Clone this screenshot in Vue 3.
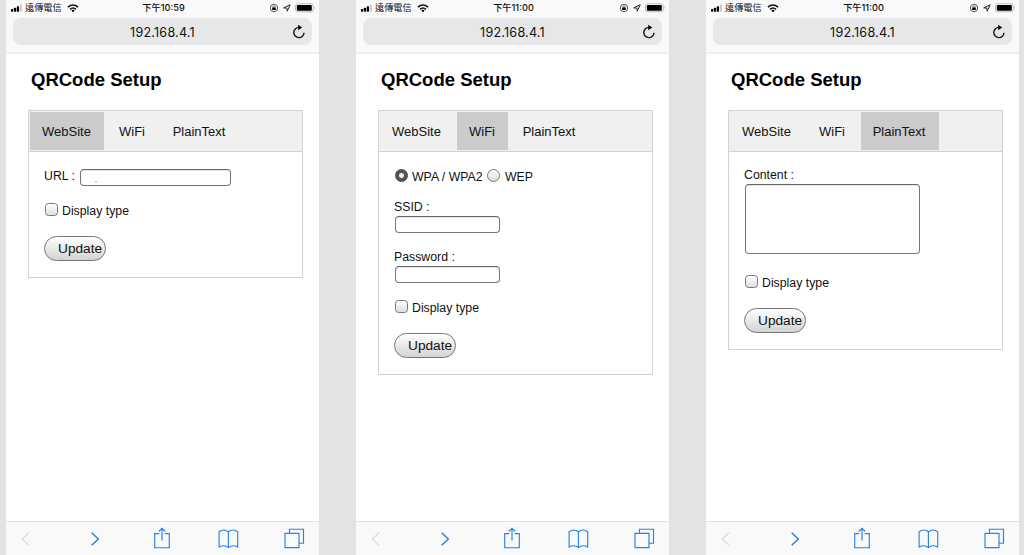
<script setup>
const tabs = ['WebSite', 'WiFi', 'PlainText']
const phones = [
  { time: '下午10:59', active: 'WebSite' },
  { time: '下午11:00', active: 'WiFi' },
  { time: '下午11:00', active: 'PlainText' },
]
</script>

<template>
  <main class="board">
    <section v-for="phone in phones" :key="phone.active" class="phone">
      <header class="chrome">
        <div class="status">
          <div class="carrier">
            <svg class="signal" width="12" height="8" viewBox="0 0 12 8">
              <rect x="0" y="5" width="2.2" height="2.7" rx=".6" />
              <rect x="2.9" y="3.7" width="2.2" height="4" rx=".6" />
              <rect x="5.8" y="2.2" width="2.2" height="5.5" rx=".6" />
              <rect x="8.8" y=".5" width="2" height="7.2" rx=".6" fill="#c6c6c6" />
            </svg>
            <span class="operator">遠傳電信</span>
            <svg width="12" height="9" viewBox="0 0 12 9">
              <g fill="none" stroke="#111" stroke-width="1.55">
                <path d="M.9 3.2Q6-1.2 11.1 3.2" />
                <path d="M3 5.3Q6 2.7 9 5.3" />
              </g>
              <path d="M4.3 6.5Q6 5.2 7.7 6.5L6 8.3Z" />
            </svg>
          </div>
          <span class="time">{{ phone.time }}</span>
          <div class="indicators">
            <svg width="10" height="10" viewBox="0 0 10 10">
              <circle cx="5" cy="5" r="3.7" fill="none" stroke="#444" stroke-width=".9" />
              <rect x="3.2" y="4.5" width="3.6" height="2.6" rx=".3" />
              <path d="M3.9 4.8V3.7Q5 2.1 6.1 3.7V4.8" fill="none" stroke="#333" stroke-width=".7" />
            </svg>
            <svg width="8" height="8" viewBox="0 0 8 8">
              <path d="M.7 3.9 7.2.8 4.2 7.2 3.9 4.1Z" fill="none" stroke="#222" stroke-width="1" stroke-linejoin="round" />
            </svg>
            <svg width="21" height="10" viewBox="0 0 21 10">
              <rect x=".5" y=".8" width="17.7" height="8" rx="2.2" fill="#fff" stroke="#b8b8b8" />
              <rect x="1.8" y="2" width="15" height="5.7" rx="1" />
              <path d="M19.2 3.3Q20.5 4.8 19.2 6.3Z" fill="#aaa" />
            </svg>
          </div>
        </div>
        <div class="address">
          <span>192.168.4.1</span>
          <svg class="reload" width="14" height="16" viewBox="0 0 14 16">
            <path d="M6.8 3.4A5.1 5.1 0 1 0 12 8.7" fill="none" stroke="#151515" stroke-width="1.4" />
            <path d="M6.2.8 10.2 3.5 6.2 6.2Z" />
          </svg>
        </div>
      </header>

      <div class="page">
        <h1>QRCode Setup</h1>
        <div class="panel">
          <nav class="tabs">
            <button v-for="tab in tabs" :key="tab" class="tab" :class="[`tab-${tab.toLowerCase()}`, { active: tab === phone.active }]">{{ tab }}</button>
          </nav>
          <form class="content" @submit.prevent>
            <div v-if="phone.active === 'WebSite'" class="url">
              <span class="url-label">URL :</span>
              <div class="field wide"><i class="dot"></i></div>
            </div>
            <template v-else-if="phone.active === 'WiFi'">
              <div class="security">
                <span class="radio checked"></span>
                <span class="wpa">WPA / WPA2</span>
                <span class="radio"></span>
                <span class="wep">WEP</span>
              </div>
              <div class="group">
                <span class="label">SSID :</span>
                <div class="field"></div>
              </div>
              <div class="group last">
                <span class="label">Password :</span>
                <div class="field"></div>
              </div>
            </template>
            <div v-else class="group message">
              <span class="label">Content :</span>
              <div class="field area"></div>
            </div>
            <div class="display"><span class="box"></span><span>Display type</span></div>
            <button class="update">Update</button>
          </form>
        </div>
      </div>

      <footer class="toolbar">
        <svg viewBox="0 0 313 33" width="313" height="33" fill="none" stroke="#2584e8" stroke-width="1.15">
          <path d="M23 10.7 16.4 17 23 23.3" stroke="#d8d8d8" />
          <path d="M85.7 10.7 92.3 17 85.7 23.3" stroke-width="1.5" />
          <path d="M153.3 11.6H148.7V25.7H163.3V11.6H158.7M156 18.5V6.8M152.8 9.5 156 6.3 159.2 9.5" />
          <path d="M222.4 9.8C219.7 7.6 216 7.6 213.1 9.8V25C216.4 23.3 219.7 23.3 222.4 25.6C225.1 23.3 228.4 23.3 231.7 25V9.8C228.8 7.6 225.1 7.6 222.4 9.8V25.6" />
          <path d="M279 11.4H293V25.6H279ZM283.5 11.2V7.2H297.5V21.2H293.2" />
        </svg>
      </footer>
    </section>
  </main>
</template>

<style>
body { background: #e3e3e3; overflow: hidden; }
</style>

<style scoped>
* { box-sizing: border-box; }
svg { display: block; flex: none; }
button { appearance: none; font-family: inherit; color: inherit; }
.board {
  display: flex;
  gap: 37px;
  width: 1024px;
  height: 555px;
  padding-left: 6px;
  overflow: hidden;
  background: #e3e3e3;
  font-family: "Liberation Sans", Arial, sans-serif;
  color: #111;
}
.phone { flex: 0 0 313px; display: flex; flex-direction: column; background: #fff; }
.chrome { height: 54px; flex: none; background: #f9f9f9; border-bottom: 2px solid #f0f0f0; }
.status {
  display: grid;
  grid-template-columns: 1fr auto 1fr;
  align-items: center;
  height: 16px;
  padding: 0 3px 0 5px;
  font-family: Inter, "Noto Sans CJK TC", sans-serif;
  font-size: 9.2px;
  line-height: 16px;
}
.carrier, .indicators { display: flex; align-items: center; }
.operator { width: 37px; margin: 0 5px 0 2px; white-space: nowrap; }
.time { width: 46px; text-align: center; white-space: nowrap; font-weight: 500; }
.indicators { justify-content: flex-end; gap: 4px; }
.address {
  position: relative;
  width: 299px;
  height: 27px;
  margin: 2px 0 0 7px;
  border-radius: 8px;
  background: #e6e7e8;
  text-align: center;
  font: 12.6px/29px Inter, sans-serif;
  letter-spacing: .2px;
}
.reload { position: absolute; right: 6px; top: 6px; }
.page { flex: 1; padding: 14px 0 0 22px; }
h1 { height: 42px; margin: 0 0 0 3px; font-size: 18.5px; line-height: 23px; color: #000; }
.panel { width: 275px; border: 1px solid #d2d2d2; }
.tabs {
  display: flex;
  gap: 3px;
  height: 41px;
  padding: 1px;
  background: #f0f0f0;
  border-bottom: 1px solid #d2d2d2;
}
.tab { height: 38px; padding: 1px 1px 0 0; border: 0; background: transparent; font-size: 13px; text-align: center; }
.tab-website { width: 74px; }
.tab-wifi { width: 51px; }
.tab-plaintext { width: 78px; padding-right: 2px; }
.tab.active { background: #cbcbcb; }
.content { padding: 17px 15px 16px; font-size: 12.3px; line-height: 15px; }
.url { display: flex; height: 34px; }
.url-label { width: 36px; font-size: 12.3px; }
.field {
  width: 105px;
  height: 17px;
  margin-left: 1px;
  border: 1px solid #777;
  border-top-color: #666;
  border-radius: 4px;
  background: #fff;
  box-shadow: inset 0 1px 1px #e5e5e5;
}
.field.wide { width: 151px; margin-left: 0; }
.dot { display: block; width: 2px; height: 1px; margin: 11px 0 0 14px; background: #aaa; }
.security { display: flex; height: 30px; line-height: 16px; }
.radio {
  flex: none;
  width: 13px;
  height: 13px;
  margin: 0 4px 0 1px;
  border: 1px solid #777;
  border-radius: 50%;
  background: linear-gradient(#fff, #dedede);
}
.radio.checked { border-color: #444; background: radial-gradient(circle, #eee 0 2px, #555 3px); }
.wpa { width: 74px; white-space: nowrap; }
.wep { padding-left: 1px; }
.group { height: 50px; }
.group.last { height: 51px; }
.label { display: block; height: 17px; line-height: 17px; }
.group.message { height: 108px; margin-top: -2px; }
.area { width: 175px; height: 70px; }
.display { display: flex; height: 33px; line-height: 16px; }
.box {
  width: 13px;
  height: 13px;
  margin: 0 4px 0 1px;
  border: 1px solid #777;
  border-radius: 3.5px;
  background: linear-gradient(#fff, #dedede);
}
.update {
  display: block;
  width: 62px;
  height: 25px;
  padding: 0 0 0 13px;
  border: 1px solid #777;
  border-radius: 13px;
  background: linear-gradient(#fff, #d3d3d3);
  font-size: 13.7px;
  text-align: left;
}
.toolbar { flex: none; height: 34px; background: #f9f9f9; border-top: 1px solid #e2e2e2; }
</style>
